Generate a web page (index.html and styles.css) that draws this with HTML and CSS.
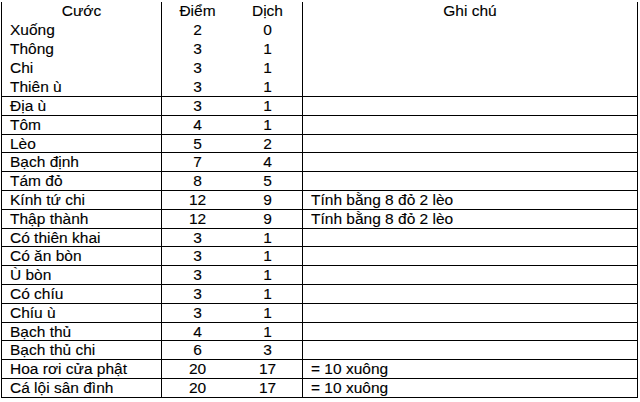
FILE: index.html
```html
<!DOCTYPE html>
<html lang="vi">
<head>
<meta charset="utf-8">
<title>Cước</title>
<link rel="stylesheet" href="styles.css">
</head>
<body>
<div class="sheet">
  <div class="row top head"><div class="c name center">Cước</div><div class="c pt">Điểm</div><div class="c dc">Dịch</div><div class="c note center">Ghi chú</div></div>
  <div class="row top"><div class="c name">Xuống</div><div class="c pt">2</div><div class="c dc">0</div><div class="c note"></div></div>
  <div class="row top"><div class="c name">Thông</div><div class="c pt">3</div><div class="c dc">1</div><div class="c note"></div></div>
  <div class="row top"><div class="c name">Chi</div><div class="c pt">3</div><div class="c dc">1</div><div class="c note"></div></div>
  <div class="row top lined"><div class="c name">Thiên ù</div><div class="c pt">3</div><div class="c dc">1</div><div class="c note"></div></div>
  <div class="row lined"><div class="c name">Địa ù</div><div class="c pt">3</div><div class="c dc">1</div><div class="c note"></div></div>
  <div class="row lined"><div class="c name">Tôm</div><div class="c pt">4</div><div class="c dc">1</div><div class="c note"></div></div>
  <div class="row lined"><div class="c name">Lèo</div><div class="c pt">5</div><div class="c dc">2</div><div class="c note"></div></div>
  <div class="row lined"><div class="c name">Bạch định</div><div class="c pt">7</div><div class="c dc">4</div><div class="c note"></div></div>
  <div class="row lined"><div class="c name">Tám đỏ</div><div class="c pt">8</div><div class="c dc">5</div><div class="c note"></div></div>
  <div class="row lined"><div class="c name">Kính tứ chi</div><div class="c pt">12</div><div class="c dc">9</div><div class="c note">Tính bằng 8 đỏ 2 lèo</div></div>
  <div class="row lined"><div class="c name">Thập thành</div><div class="c pt">12</div><div class="c dc">9</div><div class="c note">Tính bằng 8 đỏ 2 lèo</div></div>
  <div class="row lined"><div class="c name">Có thiên khai</div><div class="c pt">3</div><div class="c dc">1</div><div class="c note"></div></div>
  <div class="row lined"><div class="c name">Có ăn bòn</div><div class="c pt">3</div><div class="c dc">1</div><div class="c note"></div></div>
  <div class="row lined"><div class="c name">Ù bòn</div><div class="c pt">3</div><div class="c dc">1</div><div class="c note"></div></div>
  <div class="row lined"><div class="c name">Có chíu</div><div class="c pt">3</div><div class="c dc">1</div><div class="c note"></div></div>
  <div class="row lined"><div class="c name">Chíu ù</div><div class="c pt">3</div><div class="c dc">1</div><div class="c note"></div></div>
  <div class="row lined"><div class="c name">Bạch thủ</div><div class="c pt">4</div><div class="c dc">1</div><div class="c note"></div></div>
  <div class="row lined"><div class="c name">Bạch thủ chi</div><div class="c pt">6</div><div class="c dc">3</div><div class="c note"></div></div>
  <div class="row lined"><div class="c name">Hoa rơi cửa phật</div><div class="c pt">20</div><div class="c dc">17</div><div class="c note">= 10 xuông</div></div>
  <div class="row lined"><div class="c name">Cá lội sân đình</div><div class="c pt">20</div><div class="c dc">17</div><div class="c note">= 10 xuông</div></div>
</div>
</body>
</html>
```

FILE: styles.css
```css
html, body {
  margin: 0;
  padding: 0;
  background: #fff;
}
body {
  font-family: "Liberation Sans", Arial, sans-serif;
  font-size: 15.5px;
  color: #000;
  -webkit-text-stroke: 0.12px #000;
}
.sheet {
  margin: 2px 0 0 1px;
  width: 637px;
  box-sizing: border-box;
  border-left: 1px solid #000;
  border-right: 1px solid #000;
  display: flex;
  flex-direction: column;
}
.row {
  display: flex;
  height: 18.8px;
  box-sizing: border-box;
  line-height: 18px;
}
.row.top {
  height: 19px;
}
.row.lined {
  border-bottom: 1px solid #000;
}
.c {
  box-sizing: border-box;
  white-space: nowrap;
  overflow: hidden;
}
.name {
  width: 160px;
  padding-left: 8px;
  border-right: 1px solid #000;
}
.pt {
  width: 71px;
  text-align: center;
}
.dc {
  width: 70px;
  text-align: center;
  border-right: 1px solid #000;
}
.note {
  flex: 1;
  padding-left: 8px;
}
.center {
  text-align: center;
  padding-left: 0;
}
```
